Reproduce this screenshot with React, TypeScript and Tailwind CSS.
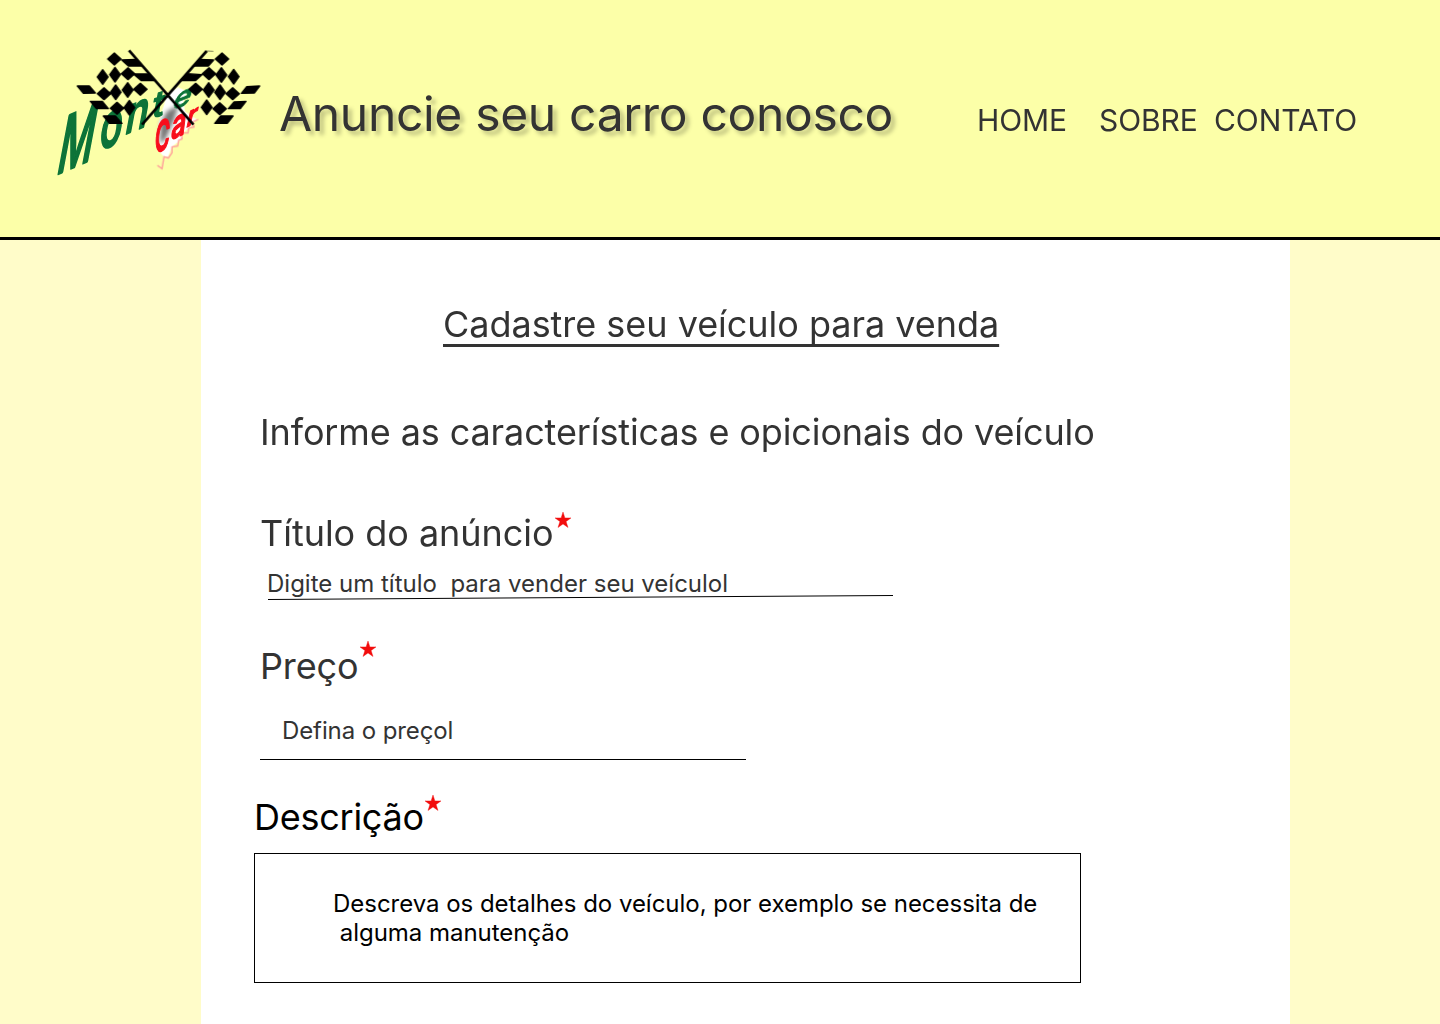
type Pt = [number, number];

const diamonds: [number, number, number, number][] = [
  [193, 57, 20, 18], [158, 111, 16, 22], [195, 104, 16, 22], [234, 101, 20, 18],
  [162, 161, 20, 18], [197, 157, 16, 22], [233, 150, 16, 22], [271, 148, 20, 18],
  [201, 205, 20, 18], [238, 203, 16, 22],
  [516, 57, 20, 18], [477, 101, 20, 18], [514, 105, 16, 22], [551, 110, 16, 22],
  [437, 148, 20, 18], [476, 150, 16, 22], [510, 157, 16, 22], [548, 161, 20, 18],
  [470, 202, 16, 22], [509, 206, 20, 18],
];

const slabs: Pt[][] = [
  [[82, 138], [118, 138], [136, 159], [100, 160]],
  [[121, 184], [157, 184], [175, 206], [139, 206]],
  [[160, 228], [196, 228], [216, 250], [178, 250]],
  [[215, 60], [256, 58], [274, 78], [235, 78]],
  [[250, 102], [297, 102], [318, 122], [274, 122]],
  [[590, 140], [629, 138], [613, 159], [574, 160]],
  [[552, 186], [588, 184], [571, 206], [535, 206]],
  [[512, 228], [549, 228], [532, 250], [494, 250]],
  [[448, 58], [491, 60], [475, 78], [432, 78]],
  [[410, 101], [456, 104], [436, 122], [390, 122]],
];

function Logo() {
  return (
    <svg className="h-[140px] w-[220px] shrink-0 overflow-visible" viewBox="0 0 660 420" role="img" aria-label="Monte Car">
      <defs>
        <filter id="soft" x="-20%" y="-20%" width="140%" height="140%">
          <feGaussianBlur stdDeviation="7" />
        </filter>
        <filter id="edge">
          <feGaussianBlur stdDeviation="1.3" />
        </filter>
      </defs>
      <g filter="url(#edge)">
        <path d="M352 160 L385 142 L412 155 L400 185 L405 215 L440 238 L420 262 L400 278 L392 300 L366 320 L354 350 L340 348 L322 328 L325 250 Z" fill="#fff" />
        <path d="M350 215 L385 195 L372 240 L345 300 L330 310 L332 250 Z" fill="#777" filter="url(#soft)" />
        <path d="M445 238 L428 246 L432 261 L416 264 L414 279 L394 278 L396 297 L386 301 L383 318 L366 321 L366 338 L355 354 L342 350 L336 386 L322 376" fill="none" stroke="#f99" strokeWidth="4" />
        <g fill="#087338" stroke="#087338" strokeWidth="4" strokeLinejoin="round" fontFamily="Inter, sans-serif" fontSize="100" fontWeight="500">
          <text transform="matrix(1.16 -.5 -.45 2.4 16 405)">M</text>
          <text transform="matrix(1.1 -.35 -.25 1.9 145 330)">o</text>
          <text transform="matrix(1.12 -.45 -.3 1.6 221 285)">n</text>
          <text transform="matrix(1.05 -.35 -.2 1.1 302 236)">t</text>
          <text transform="matrix(.9 -.35 -.3 .9 363 213)">e</text>
        </g>
        <g fill="#f8101c" stroke="#f8101c" strokeWidth="4" strokeLinejoin="round" fontFamily="Inter, sans-serif" fontSize="100" fontWeight="600">
          <text transform="matrix(.6 -.2 -.1 1.28 312 340)">C</text>
          <text transform="matrix(.76 -.35 -.15 1.2 361 301)">a</text>
          <text transform="matrix(.75 -.35 -.2 .9 406 264)">r</text>
        </g>
        <g fill="#000" stroke="#000" strokeWidth="4" strokeLinejoin="round">
          {diamonds.map(([x, y, w, h]) => (
            <path key={`${x}-${y}`} d={`M${x} ${y - h}L${x + w} ${y}L${x} ${y + h}L${x - w} ${y}Z`} />
          ))}
          {slabs.map((p) => (
            <polygon key={p.join(" ")} points={p.join(" ")} />
          ))}
        </g>
        <path d="M237 31L430 254M470 33L276 254" fill="none" stroke="#000" strokeWidth="8" />
        <path d="M470 33L490 34" stroke="#000" strokeWidth="3" opacity=".5" />
      </g>
    </svg>
  );
}

function Star({ className }: { className: string }) {
  return (
    <svg className={`h-4 w-4 overflow-visible ${className}`} viewBox="0 0 16 16">
      <path fill="#f20d0d" stroke="#f20d0d" strokeWidth=".4" d="M8 0L9.900 5.900H16L11.100 9.600L13 15.500L8 11.900L3 15.500L4.900 9.600L0 5.900H6.100Z" />
    </svg>
  );
}

export default function App() {
  return (
    <div className="h-[1024px] overflow-hidden bg-[#fffcc9] font-['Inter',sans-serif] text-[#333]">
      <header className="flex h-60 items-start border-b-3 border-black bg-[#fcffa8] pl-[50px]">
        <div className="pt-10"><Logo /></div>
        <h1 className="ml-[9px] mt-[85px] w-[698px] whitespace-nowrap text-[48px] leading-[58px] tracking-[-0.32px] [text-shadow:4px_4px_4px_rgba(0,0,0,0.25)]">
          Anuncie seu carro conosco
        </h1>
        <nav className="mt-[101px] flex whitespace-nowrap text-[30px] leading-[39px] tracking-[-0.1px]">
          <a className="w-[122px]">HOME</a>
          <a className="w-[115px]">SOBRE</a>
          <a>CONTATO</a>
        </nav>
      </header>

      <main className="ml-[201px] flex h-[784px] w-[1089px] flex-col items-start whitespace-pre bg-white text-2xl leading-[29px] tracking-[-0.03px]">
        <h2 className="ml-[242px] mt-[62px] text-[36px] leading-[44px] underline decoration-[2.5px] underline-offset-[7px] [text-decoration-skip-ink:none]">Cadastre seu veículo para venda</h2>
        <p className="ml-[59px] mt-16 text-[36px] leading-[44px] tracking-[-0.11px]">Informe as características e opicionais do veículo</p>

        <div className="ml-[59px] mt-[57px] flex">
          <label className="text-[36px] leading-[44px]">Título do anúncio</label>
          <Star className="ml-[1.500px] mt-px" />
        </div>
        <div className="ml-[66px] mt-[14px] tracking-normal">Digite um título  para vender seu veículol</div>
        <svg className="-mt-[3px] ml-[67px] h-[6px] w-[625px]" viewBox="0 0 625 6">
          <path d="M0 4.500L625 .5" stroke="#000" />
        </svg>

        <div className="ml-[59px] mt-[40px] flex">
          <label className="mt-[3px] text-[36px] leading-[44px] tracking-[-0.15px]">Preço</label>
          <Star className="ml-[1.500px]" />
        </div>
        <div className="ml-[59px] mt-[28px] h-[44px] w-[486px] border-b border-black pl-[22px] tracking-[-0.1px]">Defina o preçol</div>

        <div className="ml-[53px] mt-[35px] flex text-black">
          <label className="text-[36px] leading-[44px] tracking-[-0.25px]">Descrição</label>
          <Star className="ml-[1.500px]" />
        </div>
        <div className="ml-[53px] mt-[14px] h-[130px] w-[827px] border border-black pl-[78px] pt-[35px] text-black">
          {"Descreva os detalhes do veículo, por exemplo se necessita de\n alguma manutenção"}
        </div>
      </main>
    </div>
  );
}
